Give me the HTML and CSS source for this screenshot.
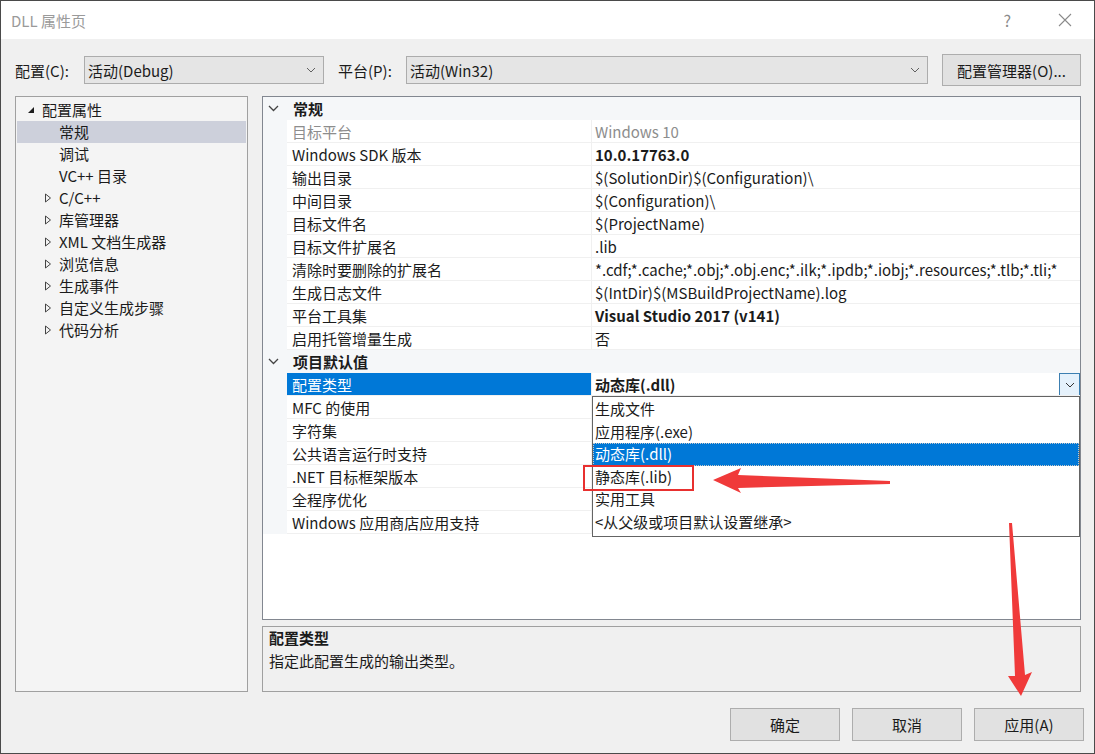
FILE: index.html
```html
<!DOCTYPE html>
<html lang="zh-CN">
<head>
<meta charset="utf-8">
<title>DLL 属性页</title>
<link rel="stylesheet" href="styles.css">
</head>
<body>
<div class="win">
  <div class="titlebar">
    <span class="title">DLL 属性页</span>
    <span class="tb-btns">
      <span class="help">?</span>
      <svg class="close" width="14" height="14" viewBox="0 0 14 14"><path d="M1 1L13 13M13 1L1 13" stroke="#8a8a8a" stroke-width="1.1" fill="none"/></svg>
    </span>
  </div>

  <div class="toolbar">
    <span class="lbl">配置(C):</span>
    <div class="combo combo-cfg"><span>活动(Debug)</span><svg width="10" height="6" viewBox="0 0 10 6"><path d="M1 1L5 5L9 1" stroke="#606060" fill="none"/></svg></div>
    <span class="lbl lbl-plat">平台(P):</span>
    <div class="combo combo-plat"><span>活动(Win32)</span><svg width="10" height="6" viewBox="0 0 10 6"><path d="M1 1L5 5L9 1" stroke="#606060" fill="none"/></svg></div>
    <button class="btn btn-mgr">配置管理器(O)...</button>
  </div>

  <div class="main">
    <div class="tree">
      <div class="node root"><svg class="tri" width="8" height="8" viewBox="0 0 8 8"><path d="M7 1L7 7L1 7Z" fill="#1e1e1e"/></svg><span>配置属性</span></div>
      <div class="node leaf sel"><span>常规</span></div>
      <div class="node leaf"><span>调试</span></div>
      <div class="node leaf"><span>VC++ 目录</span></div>
      <div class="node coll"><svg class="tri" width="8" height="10" viewBox="0 0 8 10"><path d="M1.5 1L6.5 5L1.5 9Z" fill="none" stroke="#444"/></svg><span>C/C++</span></div>
      <div class="node coll"><svg class="tri" width="8" height="10" viewBox="0 0 8 10"><path d="M1.5 1L6.5 5L1.5 9Z" fill="none" stroke="#444"/></svg><span>库管理器</span></div>
      <div class="node coll"><svg class="tri" width="8" height="10" viewBox="0 0 8 10"><path d="M1.5 1L6.5 5L1.5 9Z" fill="none" stroke="#444"/></svg><span>XML 文档生成器</span></div>
      <div class="node coll"><svg class="tri" width="8" height="10" viewBox="0 0 8 10"><path d="M1.5 1L6.5 5L1.5 9Z" fill="none" stroke="#444"/></svg><span>浏览信息</span></div>
      <div class="node coll"><svg class="tri" width="8" height="10" viewBox="0 0 8 10"><path d="M1.5 1L6.5 5L1.5 9Z" fill="none" stroke="#444"/></svg><span>生成事件</span></div>
      <div class="node coll"><svg class="tri" width="8" height="10" viewBox="0 0 8 10"><path d="M1.5 1L6.5 5L1.5 9Z" fill="none" stroke="#444"/></svg><span>自定义生成步骤</span></div>
      <div class="node coll"><svg class="tri" width="8" height="10" viewBox="0 0 8 10"><path d="M1.5 1L6.5 5L1.5 9Z" fill="none" stroke="#444"/></svg><span>代码分析</span></div>
    </div>

    <div class="right">
      <div class="grid">
        <div class="cat"><svg class="chev" width="11" height="7" viewBox="0 0 11 7"><path d="M1 1L5.5 5.5L10 1" stroke="#444" stroke-width="1.3" fill="none"/></svg><span>常规</span></div>
        <div class="row dis"><div class="gut"></div><div class="name">目标平台</div><div class="val">Windows 10</div></div>
        <div class="row"><div class="gut"></div><div class="name">Windows SDK 版本</div><div class="val b">10.0.17763.0</div></div>
        <div class="row"><div class="gut"></div><div class="name">输出目录</div><div class="val">$(SolutionDir)$(Configuration)\</div></div>
        <div class="row"><div class="gut"></div><div class="name">中间目录</div><div class="val">$(Configuration)\</div></div>
        <div class="row"><div class="gut"></div><div class="name">目标文件名</div><div class="val">$(ProjectName)</div></div>
        <div class="row"><div class="gut"></div><div class="name">目标文件扩展名</div><div class="val">.lib</div></div>
        <div class="row"><div class="gut"></div><div class="name">清除时要删除的扩展名</div><div class="val">*.cdf;*.cache;*.obj;*.obj.enc;*.ilk;*.ipdb;*.iobj;*.resources;*.tlb;*.tli;*</div></div>
        <div class="row"><div class="gut"></div><div class="name">生成日志文件</div><div class="val">$(IntDir)$(MSBuildProjectName).log</div></div>
        <div class="row"><div class="gut"></div><div class="name">平台工具集</div><div class="val b">Visual Studio 2017 (v141)</div></div>
        <div class="row"><div class="gut"></div><div class="name">启用托管增量生成</div><div class="val">否</div></div>
        <div class="cat"><svg class="chev" width="11" height="7" viewBox="0 0 11 7"><path d="M1 1L5.5 5.5L10 1" stroke="#444" stroke-width="1.3" fill="none"/></svg><span>项目默认值</span></div>
        <div class="row selrow"><div class="gut"></div><div class="name">配置类型</div><div class="val b">动态库(.dll)<span class="ddbtn"><svg width="10" height="6" viewBox="0 0 10 6"><path d="M1 1L5 5L9 1" stroke="#333" fill="none"/></svg></span></div></div>
        <div class="row"><div class="gut"></div><div class="name">MFC 的使用</div><div class="val"></div></div>
        <div class="row"><div class="gut"></div><div class="name">字符集</div><div class="val"></div></div>
        <div class="row"><div class="gut"></div><div class="name">公共语言运行时支持</div><div class="val"></div></div>
        <div class="row"><div class="gut"></div><div class="name">.NET 目标框架版本</div><div class="val"></div></div>
        <div class="row"><div class="gut"></div><div class="name">全程序优化</div><div class="val"></div></div>
        <div class="row"><div class="gut"></div><div class="name">Windows 应用商店应用支持</div><div class="val"></div></div>

        <div class="dropdown">
          <div class="opt">生成文件</div>
          <div class="opt">应用程序(.exe)</div>
          <div class="opt cur">动态库(.dll)</div>
          <div class="opt">静态库(.lib)</div>
          <div class="opt">实用工具</div>
          <div class="opt">&lt;从父级或项目默认设置继承&gt;</div>
        </div>
      </div>
      <div class="desc">
        <div class="desc-title">配置类型</div>
        <div class="desc-text">指定此配置生成的输出类型。</div>
      </div>
    </div>
  </div>

  <div class="footer">
    <button class="btn fbtn">确定</button>
    <button class="btn fbtn">取消</button>
    <button class="btn fbtn">应用(A)</button>
  </div>

  <svg class="annot" width="1095" height="754" viewBox="0 0 1095 754">
    <rect x="584" y="466" width="109" height="24" fill="none" stroke="#e8302f" stroke-width="2"/>
    <path d="M713 480L741 468L738 475L890 481L890 484L738 488L741 493Z" fill="#f03a3a"/>
    <path d="M1009 523L1012 523L1025 675L1032 672L1021 696L1008 676L1015 676Z" fill="#f03a3a"/>
  </svg>
</div>
</body>
</html>
```

FILE: styles.css
```css
* { box-sizing: border-box; }
html, body { margin: 0; padding: 0; }
body {
  font-family: "Microsoft YaHei UI", "Noto Sans CJK SC", sans-serif;
  font-size: 15px;
  color: #1b1b1b;
  background: #f0f0f0;
}
.win {
  position: relative;
  width: 1095px;
  height: 754px;
  border: 1px solid #4a4a4a;
  background: #f0f0f0;
  overflow: hidden;
}
.titlebar {
  height: 38px;
  background: #fff;
  display: flex;
  align-items: center;
  justify-content: space-between;
  padding: 0 22px 0 10px;
}
.title { color: #9a9a9a; font-size: 15px; }
.tb-btns { display: flex; align-items: center; gap: 47px; }
.help { color: #8a8a8a; font-size: 16px; }
.toolbar {
  display: flex;
  align-items: center;
  height: 32px;
  margin-top: 15px;
  padding-left: 14px;
}
.lbl { width: 69px; }
.lbl-plat { width: 68px; margin-left: 14px; }
.combo {
  height: 28px;
  background: #e5e5e5;
  border: 1px solid #acacac;
  display: flex;
  align-items: center;
  justify-content: space-between;
  padding: 0 7px 0 3px;
}
.combo-cfg { width: 240px; }
.combo-plat { width: 522px; }
.btn {
  font-family: inherit;
  font-size: 15px;
  color: #1b1b1b;
  background: #e1e1e1;
  border: 1px solid #adadad;
  padding: 0;
}
.btn-mgr { width: 139px; height: 32px; margin-left: 14px; }
.main {
  display: flex;
  gap: 14px;
  margin-top: 10px;
  padding-left: 14px;
  height: 596px;
}
.tree {
  width: 233px;
  height: 596px;
  background: #f4f4f4;
  border: 1px solid #a0a0a0;
  padding: 2px 1px 1px;
}
.node {
  height: 22px;
  display: flex;
  align-items: center;
  line-height: 22px;
}
.node.root { padding-left: 10px; }
.node.root .tri { margin-right: 7px; margin-top: -1px; }
.node.leaf { padding-left: 42px; }
.node.coll { padding-left: 27px; }
.node.coll .tri { margin-right: 7px; }
.node.sel { background: #cdd0db; }
.right {
  width: 819px;
  display: flex;
  flex-direction: column;
  gap: 6px;
}
.grid {
  position: relative;
  height: 524px;
  background: #fff;
  border: 1px solid #828790;
}
.cat {
  height: 23px;
  display: flex;
  align-items: center;
  background: #f5f7f9;
  font-weight: bold;
  padding-left: 5px;
}
.cat .chev { margin-right: 14px; }
.row {
  height: 23px;
  display: flex;
}
.gut { width: 24px; background: #f5f7f9; }
.name {
  width: 305px;
  padding-left: 5px;
  padding-top: 2px;
  line-height: 20px;
  border-bottom: 1px solid #f0f0f0;
  border-right: 1px solid #f0f0f0;
  white-space: nowrap;
}
.val {
  flex: 1;
  position: relative;
  padding-left: 3px;
  padding-top: 2px;
  line-height: 20px;
  border-bottom: 1px solid #f0f0f0;
  white-space: nowrap;
  overflow: hidden;
}
.b { font-weight: bold; }
.dis .name, .dis .val { color: #8d8d8d; }
.selrow .name { background: #0078d7; color: #fff; }
.ddbtn {
  position: absolute;
  right: 0;
  top: 0;
  width: 21px;
  height: 23px;
  background: #e5f1fb;
  border: 1px solid #3c7fb1;
  display: flex;
  align-items: center;
  justify-content: center;
}
.dropdown {
  position: absolute;
  left: 329px;
  top: 299px;
  width: 488px;
  height: 141px;
  background: #fff;
  border: 1px solid #646464;
  padding-top: 1px;
}
.opt {
  height: 22.5px;
  line-height: 22px;
  padding-left: 2px;
  white-space: nowrap;
}
.opt.cur {
  background: #0078d7;
  color: #fff;
  outline: 1px dotted #c8c8c8;
  outline-offset: -1px;
}
.desc {
  height: 66px;
  background: #f0f0f0;
  border: 1px solid #a0a0a0;
  padding: 0 6px;
}
.desc-title { font-weight: bold; line-height: 22px; }
.desc-text { line-height: 24px; }
.footer {
  display: flex;
  justify-content: flex-end;
  gap: 12px;
  padding-right: 10px;
  margin-top: 16px;
}
.fbtn { width: 110px; height: 33px; }
.annot {
  position: absolute;
  left: -1px;
  top: -1px;
  pointer-events: none;
}
```
